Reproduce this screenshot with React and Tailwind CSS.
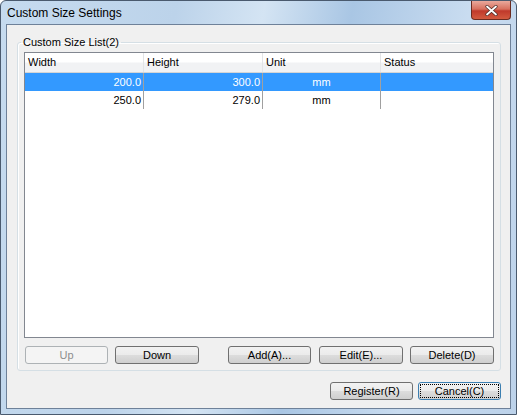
import React from 'react'

const font = { fontFamily: '"Liberation Sans", Arial, sans-serif' }

function Btn({ children, disabled, focused, className = '' }) {
  if (disabled) {
    return (
      <div className={`h-[18px] rounded-[3px] border border-[#adb2b5] bg-[#f4f4f4] flex items-center justify-center text-[11px] text-[#8d8d8d] ${className}`}>
        {children}
      </div>
    )
  }
  return (
    <div
      className={`h-[18px] rounded-[3px] border ${focused ? 'border-[#3c7fb1]' : 'border-[#707070]'} bg-[linear-gradient(#f2f2f2_0%,#ebebeb_50%,#dddddd_50%,#cfcfcf_100%)] flex items-center justify-center text-[11px] text-black p-[1px] ${className}`}
    >
      {focused ? (
        <div className="w-full h-full border border-dotted border-black flex items-center justify-center">{children}</div>
      ) : (
        children
      )}
    </div>
  )
}

const rows = [
  { w: '200.0', h: '300.0', u: 'mm', s: '', sel: true },
  { w: '250.0', h: '279.0', u: 'mm', s: '', sel: false },
]

export default function App() {
  return (
    <div
      style={font}
      className="w-[517px] h-[415px] bg-[linear-gradient(100deg,#c6dbef_0%,#bcd3ea_30%,#d4e4f3_45%,#a9c6e4_60%,#c9dcf0_80%,#bcd2ea_100%)] flex flex-col border border-[#4a5a6e] rounded-t-[6px] overflow-hidden"
    >
      <div className="h-[23px] flex items-start justify-between shrink-0">
        <div className="pl-[6px] pt-[3px] text-[12px] text-black">Custom Size Settings</div>
        <div className="mr-[5px] w-[40px] h-[19px] rounded-b-[4px] border border-t-0 border-[#6b2b20] bg-[linear-gradient(#e9a99c_0%,#d7705e_45%,#c0392b_55%,#d35a3f_100%)] flex items-center justify-center">
          <svg width="13" height="11" viewBox="0 0 13 11">
            <path d="M2 1.5 L11 9.5 M11 1.5 L2 9.5" stroke="#4a2a25" strokeWidth="3.2" strokeLinecap="round" />
            <path d="M2 1.5 L11 9.5 M11 1.5 L2 9.5" stroke="#fff" strokeWidth="1.8" strokeLinecap="round" />
          </svg>
        </div>
      </div>
      <div className="ml-[5px] w-[505px] h-[385px] border border-[#6e8199] bg-[#f0f0f0] flex flex-col">
        <fieldset className="ml-[10px] mt-[9px] w-[483px] h-[337px] border border-[#d5dfe5] rounded-[3px] px-[6px] pb-[6px] shadow-[inset_1px_1px_0_#fff]">
          <legend className="-ml-[3px] px-[2px] text-[11px] text-black leading-[16px]">Custom Size List(2)</legend>
          <div className="mt-[2px] w-[470px] h-[286px] border border-[#828790] bg-white">
            <div className="flex h-[20px] bg-[linear-gradient(#ffffff_0%,#ffffff_45%,#f1f2f4_55%,#f1f2f4_100%)] border-b border-[#d5d5d5] text-[11px] text-black">
              <div className="w-[119px] border-r border-[#e3e4e6] pl-[3px] flex items-center">Width</div>
              <div className="w-[119px] border-r border-[#e3e4e6] pl-[3px] flex items-center">Height</div>
              <div className="w-[118px] border-r border-[#e3e4e6] pl-[3px] flex items-center">Unit</div>
              <div className="flex-1 pl-[3px] flex items-center">Status</div>
            </div>
            {rows.map((r, i) => (
              <div key={i} className={`flex h-[18px] text-[11px] ${r.sel ? 'bg-[#3399ff] text-white' : 'text-black'}`}>
                <div className="w-[119px] border-r border-[#a0a0a0] pr-[2px] flex items-center justify-end">{r.w}</div>
                <div className="w-[119px] border-r border-[#a0a0a0] pr-[2px] flex items-center justify-end">{r.h}</div>
                <div className="w-[118px] border-r border-[#a0a0a0] flex items-center justify-center">{r.u}</div>
                <div className="flex-1 flex items-center">{r.s}</div>
              </div>
            ))}
          </div>
          <div className="mt-[8px] flex ml-[1px]">
            <Btn disabled className="w-[83px]">Up</Btn>
            <Btn className="w-[84px] ml-[7px]">Down</Btn>
            <Btn className="w-[83px] ml-[29px]">Add(A)...</Btn>
            <Btn className="w-[84px] ml-[8px]">Edit(E)...</Btn>
            <Btn className="w-[84px] ml-[7px]">Delete(D)</Btn>
          </div>
        </fieldset>
        <div className="mt-[11px] flex justify-end pr-[9px] gap-[5px]">
          <Btn className="w-[83px]">Register(R)</Btn>
          <Btn focused className="w-[83px]">Cancel(C)</Btn>
        </div>
      </div>
    </div>
  )
}
